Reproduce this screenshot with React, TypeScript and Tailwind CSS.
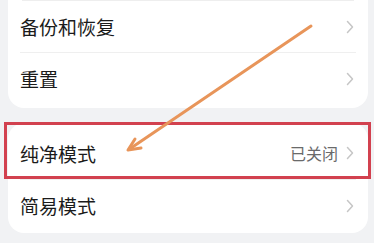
import React from "react";

function Chevron() {
  return <svg width="8" height="14" viewBox="0 0 8 14" className="shrink-0">
    <path d="M1.5 1.5 L6.5 7 L1.5 12.5" fill="none" stroke="#c6c6c6" strokeWidth="1.5" strokeLinecap="round" strokeLinejoin="round" />
  </svg>;
}

function Row({ label, value, height = "h-[51px]" }: { label: string; value?: string; height?: string }) {
  return <div className={`flex ${height} items-center justify-between pl-[12px] pr-[14px]`}>
    <span className="text-[19px] leading-none text-[#1b1b1b]">{label}</span>
    <div className="flex items-center gap-[8px]">
      {value && <span className="text-[16px] leading-none text-[#6a6a6a]">{value}</span>}
      <Chevron />
    </div>
  </div>;
}

export default function App() {
  return <div className="relative h-[243px] w-[374px] overflow-hidden bg-[#f1f2f4]" style={{ fontFamily: '"Noto Sans CJK SC", "Noto Sans", sans-serif' }}>
    <div className="flex flex-col gap-[15px] pl-[8px] pr-[6px]">
      <div className="rounded-b-[16px] bg-white pb-[4px]">
        <div className="mx-[14px] h-px bg-[#eeeeee]" />
        <Row label="备份和恢复" />
        <div className="mx-[12px] h-px bg-[#efefef]" />
        <Row label="重置" />
      </div>
      <div className="rounded-[16px] bg-white pb-[2px] pt-[4px]">
        <Row label="纯净模式" value="已关闭" height="h-[52px]" />
        <div className="mx-[12px] h-px bg-[#efefef]" />
        <Row label="简易模式" height="h-[51px]" />
      </div>
    </div>
    <div className="absolute left-[4px] top-[122px] h-[57px] w-[367px] border-[3px] border-[#d2414f]" />
    <svg className="absolute left-0 top-0" width="374" height="243" viewBox="0 0 374 243">
      <line x1="311" y1="26" x2="131" y2="148" stroke="#e8955a" strokeWidth="3" strokeLinecap="round" />
      <polyline points="135,139 128,150 141,148" fill="none" stroke="#e8955a" strokeWidth="3" strokeLinecap="round" strokeLinejoin="round" />
    </svg>
  </div>;
}
